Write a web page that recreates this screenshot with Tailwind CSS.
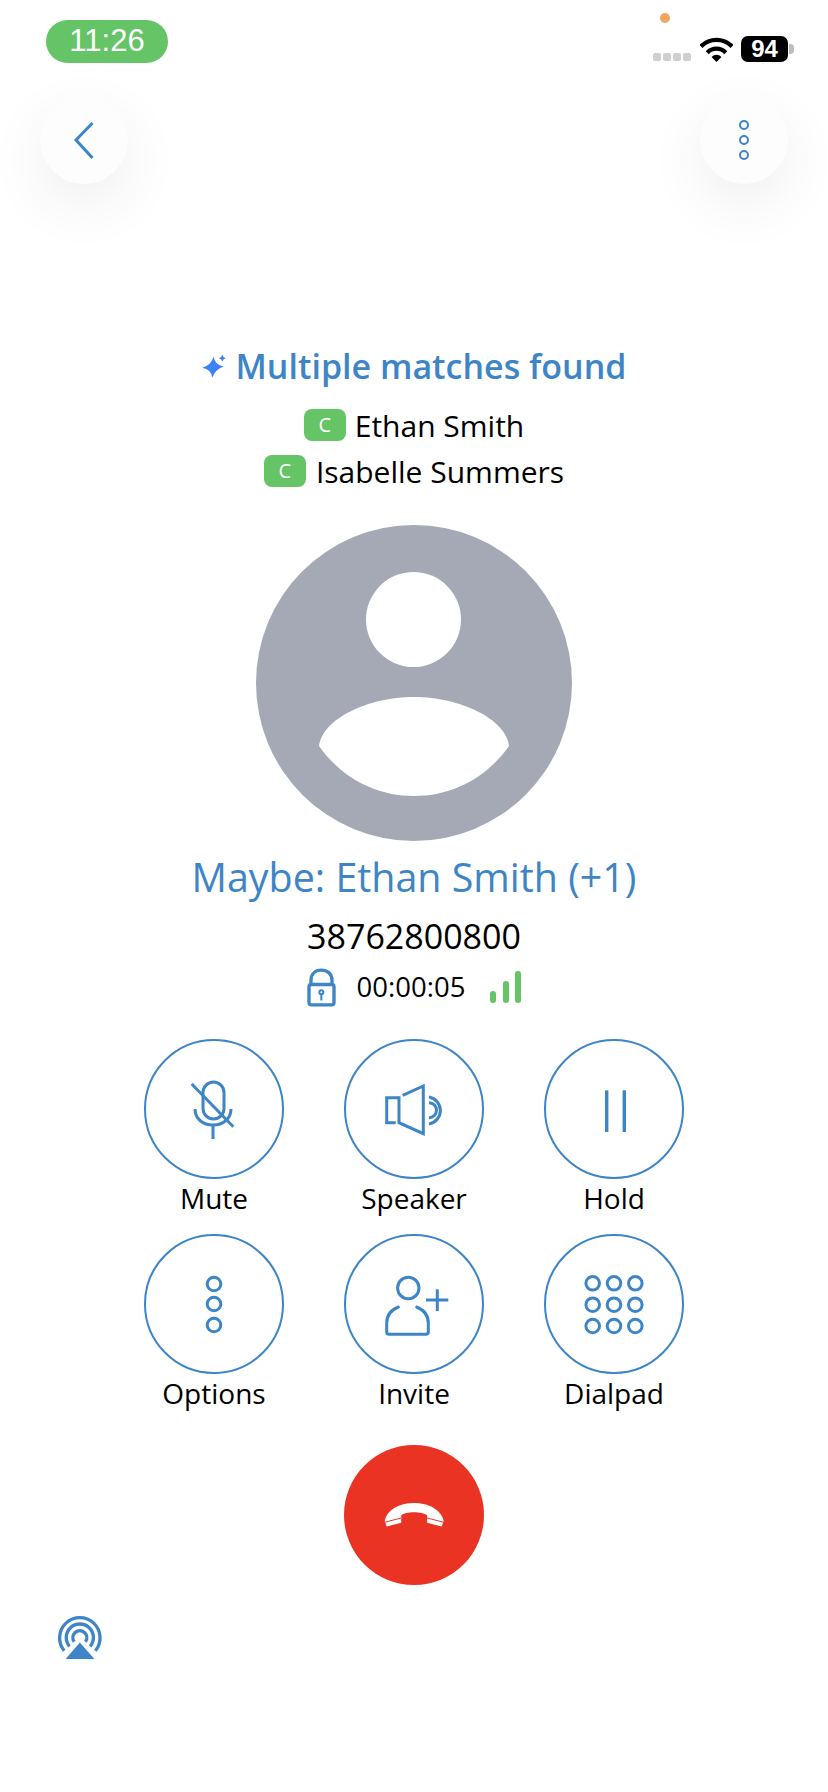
<!DOCTYPE html>
<html lang="en">
<head>
<meta charset="UTF-8">
<title>Call</title>
<script src="https://cdn.jsdelivr.net/npm/@tailwindcss/browser@4"></script>
</head>
<body class="bg-white">
<div class="w-[828px] h-[1792px] overflow-hidden bg-white flex flex-col items-center font-['Open_Sans',sans-serif] text-black">

  <!-- status bar -->
  <div class="relative w-full h-[96px] flex justify-between items-start pt-[20px] pl-[46px] pr-[34px]">
    <div class="w-[122px] h-[43px] rounded-[22px] bg-[#65c466] flex items-center justify-center text-white text-[31px] font-['Liberation_Sans',sans-serif]">11:26</div>
    <span class="absolute left-[660px] top-[13px] w-[10px] h-[10px] rounded-full bg-[#f4a45f]"></span>
    <div class="flex items-start mt-[16px]">
      <div class="flex gap-[2px] mt-[17px] mr-[9px]">
        <span class="w-[8px] h-[8px] rounded-[2px] bg-[#cfcfcf]"></span>
        <span class="w-[8px] h-[8px] rounded-[2px] bg-[#cfcfcf]"></span>
        <span class="w-[8px] h-[8px] rounded-[2px] bg-[#cfcfcf]"></span>
        <span class="w-[8px] h-[8px] rounded-[2px] bg-[#cfcfcf]"></span>
      </div>
      <svg class="w-[33px] h-[26px] mt-[1px] mr-[8px]" viewBox="178 108 100 78" fill="none" stroke="#000" stroke-width="13">
        <path d="M181 136A66 66 0 0 1 275 136"/>
        <path d="M200 155A39 39 0 0 1 256 155"/>
        <path d="M228 183L213 168A21 21 0 0 1 243 168Z" fill="#000" stroke="none"/>
      </svg>
      <div class="w-[47px] h-[26px] rounded-[7px] bg-black text-white flex items-center justify-center text-[24px] font-bold font-['Liberation_Sans',sans-serif]">94</div>
      <span class="w-[5px] h-[10px] mt-[8px] ml-[1px] rounded-r-[4px] bg-[#bdbdbd]"></span>
    </div>
  </div>

  <!-- top nav -->
  <div class="w-full flex justify-between px-[40px]">
    <button class="w-[88px] h-[88px] rounded-full bg-[#fdfdfd] shadow-[0_20px_60px_rgba(0,0,0,0.07)] flex items-center justify-center">
      <svg class="w-[24px] h-[40px]" viewBox="0 0 24 40" fill="none" stroke="#3d85c6" stroke-width="3"><path d="M20.5 3L4 20L20.5 38"/></svg>
    </button>
    <button class="w-[88px] h-[88px] rounded-full bg-[#fdfdfd] shadow-[0_20px_60px_rgba(0,0,0,0.07)] flex items-center justify-center">
      <svg class="w-[12px] h-[42px]" viewBox="0 0 12 42" fill="none" stroke="#3d85c6" stroke-width="2"><circle cx="6" cy="6" r="4"/><circle cx="6" cy="21" r="4"/><circle cx="6" cy="36" r="4"/></svg>
    </button>
  </div>

  <!-- match list -->
  <div class="mt-[159px] h-[46px] flex items-center gap-[10px] text-[34px] font-semibold text-[#3d85c6]">
    <svg class="w-[24px] h-[25px]" viewBox="67 72 72 72" fill="#3b82f6">
      <path d="M102 79Q105 104 132 108Q107 116 98 142Q95 117 68 112Q93 105 102 79Z"/>
      <path d="M128 73Q130 81 138 83Q130 85 128 93Q126 85 118 83Q126 81 128 73Z"/>
    </svg>
    <span>Multiple matches found</span>
  </div>
  <div class="mt-[13px] h-[46px] flex items-center gap-[9px] text-[30px]">
    <span class="w-[42px] h-[32px] rounded-[8px] bg-[#65c466] text-white text-[20px] flex items-center justify-center">C</span>
    <span>Ethan Smith</span>
  </div>
  <div class="h-[46px] flex items-center gap-[10px] text-[30px]">
    <span class="w-[42px] h-[32px] rounded-[8px] bg-[#65c466] text-white text-[20px] flex items-center justify-center">C</span>
    <span>Isabelle Summers</span>
  </div>

  <!-- avatar -->
  <svg class="mt-[31px] w-[316px] h-[316px] shrink-0" viewBox="0 0 316 316">
    <circle cx="158" cy="158" r="158" fill="#a5a9b6"/>
    <circle cx="157.5" cy="94.5" r="47.5" fill="#fff"/>
    <path d="M63 221C66 194 112 172 158 172C204 172 250 194 253 221C232 251 198 271 158 271C118 271 84 251 63 221Z" fill="#fff"/>
  </svg>

  <div class="mt-[12px] h-[50px] flex items-center text-[39.4px] text-[#3d85c6]">Maybe: Ethan Smith (+1)</div>
  <div class="mt-[11px] h-[44px] flex items-center text-[34px]">38762800800</div>
  <div class="mt-[9px] h-[40px] flex items-center text-[27.5px]">
    <svg class="w-[29px] h-[39px]" viewBox="380 383 87 116" fill="none" stroke="#3d85c6" stroke-width="10">
      <path d="M392 432V420C392 400 405 389 423 389C441 389 455 400 455 420V432"/>
      <rect x="386" y="432" width="75" height="61" rx="7"/>
      <circle cx="423" cy="455" r="6" stroke-width="6"/>
      <path d="M423 460V480" stroke-width="6"/>
    </svg>
    <span class="ml-[21px]">00:00:05</span>
    <span class="ml-[25px] flex items-end gap-[6.5px] h-[32px]">
      <span class="w-[6px] h-[12px] rounded-full bg-[#65c466]"></span>
      <span class="w-[6px] h-[22px] rounded-full bg-[#65c466]"></span>
      <span class="w-[6px] h-[32px] rounded-full bg-[#65c466]"></span>
    </span>
  </div>

  <!-- call controls -->
  <div class="mt-[32px] w-[600px] grid grid-cols-3 gap-y-[17px] text-[28px] text-center">
    <div class="flex flex-col items-center">
      <button class="w-[140px] h-[140px] rounded-full border-[2.5px] border-[#3d85c6] flex items-center justify-center">
        <svg class="w-[80px] h-[80px]" viewBox="-8 -8 80 80" fill="none" stroke="#3d85c6" stroke-width="3">
          <rect x="21" y="5" width="21" height="37" rx="10.5"/>
          <path d="M13 32C13 42 21 48 31 48C41 48 49 42 49 32"/>
          <path d="M31 48V62"/>
          <path d="M9.7 7L51.3 49.7"/>
        </svg>
      </button>
      <span class="h-[38px] leading-[38px]">Mute</span>
    </div>
    <div class="flex flex-col items-center">
      <button class="w-[140px] h-[140px] rounded-full border-[2.5px] border-[#3d85c6] flex items-center justify-center">
        <svg class="w-[80px] h-[80px]" viewBox="-8 -8 80 80" fill="none" stroke="#3d85c6" stroke-width="3">
          <path d="M13.7 45.7H4.7V20.7H17V45.7L41.3 56.7V9L20.7 18.3"/>
          <path d="M47 20A13.7 13.7 0 0 1 47 47"/>
          <path d="M47 25.7A7.5 7.5 0 0 1 47 40.7"/>
        </svg>
      </button>
      <span class="h-[38px] leading-[38px]">Speaker</span>
    </div>
    <div class="flex flex-col items-center">
      <button class="w-[140px] h-[140px] rounded-full border-[2.5px] border-[#3d85c6] flex items-center justify-center">
        <svg class="w-[80px] h-[80px]" viewBox="-8 -8 80 80" fill="none" stroke="#3d85c6" stroke-width="3.4">
          <path d="M24.7 13.3V55"/>
          <path d="M42.3 13.3V55"/>
        </svg>
      </button>
      <span class="h-[38px] leading-[38px]">Hold</span>
    </div>
    <div class="flex flex-col items-center">
      <button class="w-[140px] h-[140px] rounded-full border-[2.5px] border-[#3d85c6] flex items-center justify-center">
        <svg class="w-[80px] h-[80px]" viewBox="-8 -8 80 80" fill="none" stroke="#3d85c6" stroke-width="3">
          <circle cx="32" cy="12" r="6.8"/>
          <circle cx="32" cy="32" r="6.8"/>
          <circle cx="32" cy="53" r="6.8"/>
        </svg>
      </button>
      <span class="h-[38px] leading-[38px]">Options</span>
    </div>
    <div class="flex flex-col items-center">
      <button class="w-[140px] h-[140px] rounded-full border-[2.5px] border-[#3d85c6] flex items-center justify-center">
        <svg class="w-[80px] h-[80px]" viewBox="-8 -8 80 80" fill="none" stroke="#3d85c6" stroke-width="3">
          <circle cx="26.3" cy="16" r="10.7"/>
          <path d="M16.3 35C9 38 4.7 44 4.7 51V60Q4.7 62.3 7 62.3H44Q46.3 62.3 46.3 60V51C46.3 44 42 38 34.7 35" stroke-linecap="round"/>
          <path d="M44 28H66.3"/>
          <path d="M55.3 17.3V39"/>
        </svg>
      </button>
      <span class="h-[38px] leading-[38px]">Invite</span>
    </div>
    <div class="flex flex-col items-center">
      <button class="w-[140px] h-[140px] rounded-full border-[2.5px] border-[#3d85c6] flex items-center justify-center">
        <svg class="w-[80px] h-[80px]" viewBox="-8 -8 80 80" fill="none" stroke="#3d85c6" stroke-width="3">
          <circle cx="10.7" cy="11.3" r="6.8"/><circle cx="32" cy="11.3" r="6.8"/><circle cx="53.3" cy="11.3" r="6.8"/>
          <circle cx="10.7" cy="32.7" r="6.8"/><circle cx="32" cy="32.7" r="6.8"/><circle cx="53.3" cy="32.7" r="6.8"/>
          <circle cx="10.7" cy="54" r="6.8"/><circle cx="32" cy="54" r="6.8"/><circle cx="53.3" cy="54" r="6.8"/>
        </svg>
      </button>
      <span class="h-[38px] leading-[38px]">Dialpad</span>
    </div>
  </div>

  <!-- hang up -->
  <button class="mt-[33px] w-[140px] h-[140px] rounded-full bg-[#ea3323] flex items-center justify-center shrink-0">
    <svg class="w-[61px] h-[26px]" viewBox="160 222 184 78">
      <path d="M162 278C170 245 205 225 250 225C295 225 332 245 340 278L334 296L290 284V262C275 250 225 250 212 262V284L168 296Z" fill="#fff"/>
      <path d="M162 283L212 270M290 270L340 283" fill="none" stroke="#ea3323" stroke-width="3"/>
    </svg>
  </button>

  <!-- airplay -->
  <div class="self-start ml-[53px] mt-[26px]">
    <svg class="w-[53px] h-[53px]" viewBox="40 30 160 160" fill="none" stroke="#3d85c6" stroke-width="10">
      <path d="M74 150A61 61 0 1 1 168 150"/>
      <path d="M90 137A41 41 0 1 1 152 137"/>
      <path d="M104 123A21 21 0 1 1 138 123"/>
      <path d="M121 125L165 175H78Z" fill="#3d85c6" stroke="none"/>
    </svg>
  </div>
</div>
</body>
</html>
